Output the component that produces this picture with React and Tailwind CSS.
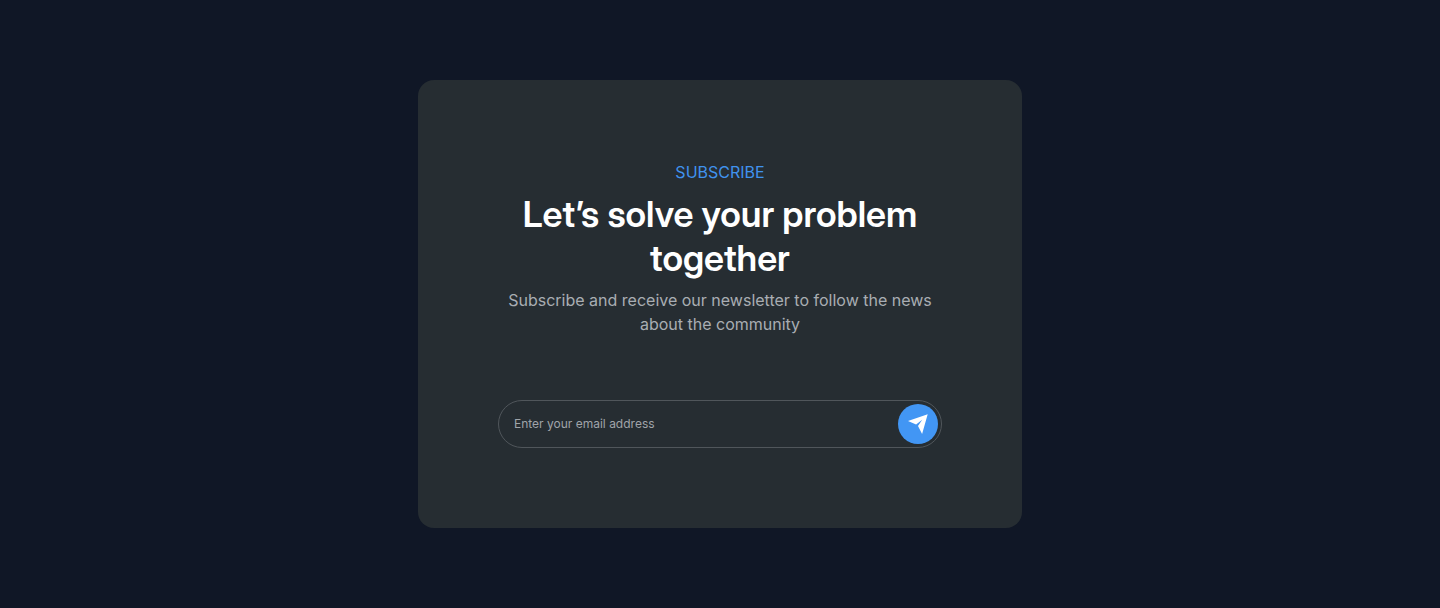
export default function App() {
  return (
    <main className="flex min-h-screen items-center justify-center bg-[#101726] px-4 py-20 font-['Inter',sans-serif]">
      <section className="w-full max-w-[604px] rounded-2xl bg-[#262d32] p-20 text-center">
        <p className="text-base text-[#4092ee]">SUBSCRIBE</p>
        <h1 className="mt-2 font-['Inter_Display','Inter',sans-serif] text-4xl leading-[44px] font-semibold text-white">
          Let’s solve your problem together
        </h1>
        <p className="mt-2 text-base text-[#a9adb3]">
          Subscribe and receive our newsletter to follow the news about the community
        </p>
        <form className="mt-16 flex items-center rounded-full border border-[#50565b] py-[3px] pr-[3px] pl-[15px]">
          <input
            type="email"
            aria-label="Email address"
            placeholder="Enter your email address"
            className="min-w-0 flex-1 bg-transparent text-xs text-white outline-none placeholder:text-[#a0a4a9]"
          />
          <button
            type="button"
            aria-label="Subscribe"
            className="flex size-10 items-center justify-center rounded-full bg-[#4296f4] text-white"
          >
            <svg viewBox="0 0 20 20" className="size-5" fill="currentColor" aria-hidden="true">
              <path d="M19.7.2 0 7 8.1 10.4 14.2 5.8 10 12 14.1 20Z" />
            </svg>
          </button>
        </form>
      </section>
    </main>
  );
}
